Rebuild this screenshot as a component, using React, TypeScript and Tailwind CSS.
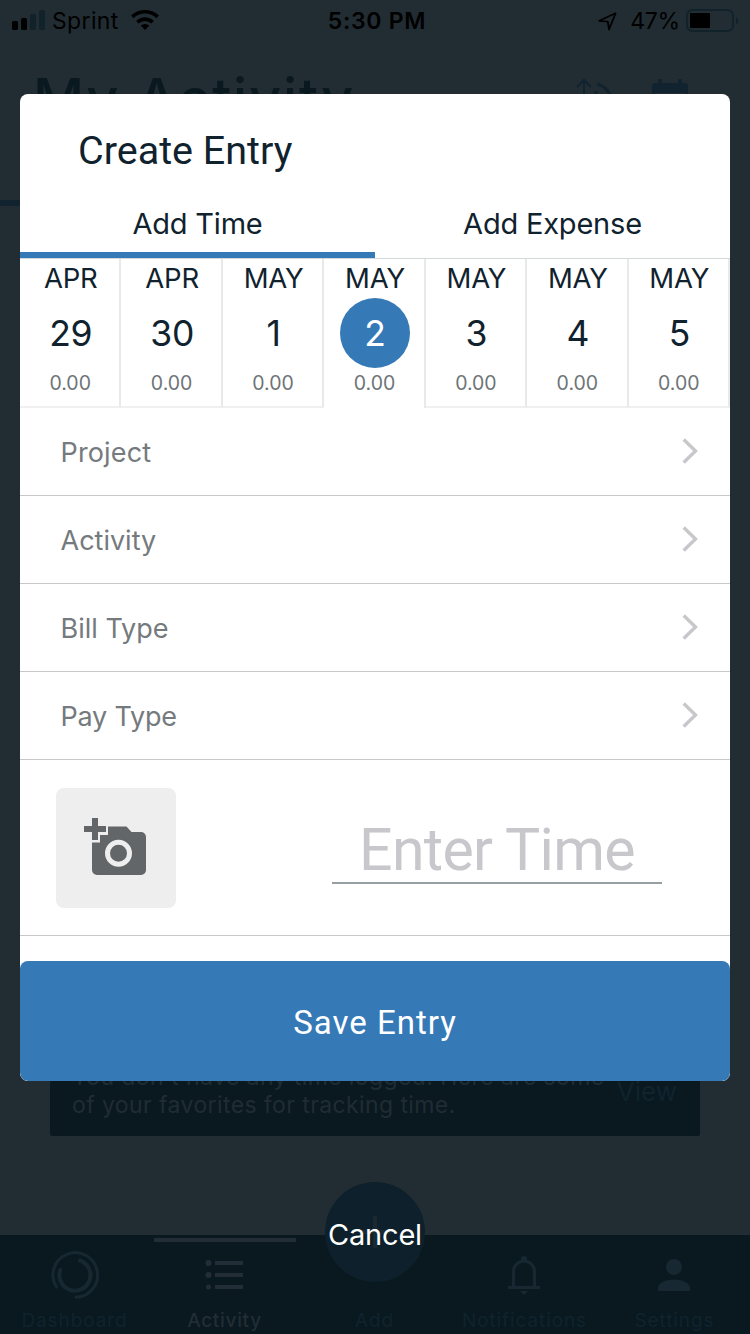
import type { ReactNode } from "react";

const DAYS = [
  { month: "APR", day: "29", hours: "0.00" },
  { month: "APR", day: "30", hours: "0.00" },
  { month: "MAY", day: "1", hours: "0.00" },
  { month: "MAY", day: "2", hours: "0.00", selected: true },
  { month: "MAY", day: "3", hours: "0.00" },
  { month: "MAY", day: "4", hours: "0.00" },
  { month: "MAY", day: "5", hours: "0.00" },
];

const FIELDS = [
  { label: "Project", tracking: "tracking-[0.15px]" },
  { label: "Activity", tracking: "tracking-[0px]" },
  { label: "Bill Type", tracking: "tracking-[0px]" },
  { label: "Pay Type", tracking: "tracking-[-0.2px]" },
];

function StatusBar() {
  return (
    <div className="flex h-10 items-center justify-between pr-[10px] pl-3 text-[23px] leading-[24px] text-black">
      <div className="flex w-[310px] items-center">
        <svg width="34" height="20" viewBox="0 0 34 20">
          <rect x="0" y="11" width="6" height="9" rx="1.5" fill="#000" />
          <rect x="9" y="8" width="6" height="12" rx="1.5" fill="#000" />
          <rect x="18" y="4" width="6" height="16" rx="1.5" fill="#11222b" />
          <rect x="27" y="0" width="6" height="20" rx="1.5" fill="#11222b" />
        </svg>
        <span className="ml-[6px] pt-[2px] tracking-[0.35px]">Sprint</span>
        <svg className="ml-3" width="28" height="20" viewBox="0 0 28 20">
          <path d="M14 20l-4.300-4.400a6.300 6.300 0 0 1 8.600 0z" fill="#000" />
          <path d="M6.400 12.200a11 11 0 0 1 15.200 0" fill="none" stroke="#000" strokeWidth="3.600" />
          <path d="M1.300 6.900a18.300 18.300 0 0 1 25.400 0" fill="none" stroke="#000" strokeWidth="3.600" />
        </svg>
      </div>
      <span className="pt-[2px] pl-[2px] font-semibold tracking-[0.7px]">5:30 PM</span>
      <div className="flex w-[310px] items-center justify-end">
        <svg className="mt-[2px]" width="19" height="19" viewBox="0 0 19 19">
          <path d="M17.500 1.300L11 17.500l-1.200-7.800L1.300 8.800z" fill="none" stroke="#000" strokeWidth="1.800" strokeLinejoin="round" />
        </svg>
        <span className="ml-[13px] pt-[2px] tracking-[-0.2px]">47%</span>
        <svg className="mt-[2px] ml-[6px]" width="54" height="24" viewBox="0 0 54 24">
          <rect x="1" y="1" width="46" height="21" rx="5.500" fill="none" stroke="#11222b" strokeWidth="2" />
          <rect x="4" y="4" width="20" height="15" rx="1" fill="#000" />
          <path d="M50 8.200c3 1 3 6.200 0 7.200z" fill="#11222b" />
        </svg>
      </div>
    </div>
  );
}

function ActivityHeader() {
  return (
    <>
      <div className="flex h-[160px] items-start justify-between pt-[35px] pr-[62px] pl-[33px]">
        <h1 className="text-[56px] leading-[48px] font-medium tracking-[1.8px] text-[#09191f]">My Activity</h1>
        <div className="flex gap-[39px] pt-[3px]">
          <svg width="38" height="40" viewBox="0 0 38 40" fill="none" stroke="#10232e" strokeWidth="2">
            <path d="M9 36V2M2 9l7-7 7 7" />
            <path d="M22 6a20 20 0 0 1 15 18" strokeWidth="3" />
            <path d="M21 13v12" strokeWidth="3" />
          </svg>
          <svg width="36" height="40" viewBox="0 0 36 40">
            <path d="M6 1h4v4h16V1h4v4h3a3 3 0 0 1 3 3v28H0V8a3 3 0 0 1 3-3h3z" fill="#10232e" />
            <path d="M3 15h30v20H3z" fill="#222d33" />
          </svg>
        </div>
      </div>
      <div className="h-[6px] w-[375px] bg-[#10232e]" />
    </>
  );
}

function FavoritesCard() {
  return (
    <div className="mx-[50px] flex h-[100px] items-center justify-between rounded-[2px] bg-[#09191f] pr-[23px] pl-[22px]">
      <p className="pt-[9px] text-[23px] leading-[28px] tracking-[0.4px] whitespace-nowrap text-[#202c33]">
        You don&apos;t have any time logged. Here are some
        <br />
        of your favorites for tracking time.
      </p>
      <span className="pt-[11px] text-[26px] text-[#10232e]">View</span>
    </div>
  );
}

function TabItem({ label, active, children }: { label: string; active?: boolean; children?: ReactNode }) {
  return (
    <div className="flex w-[150px] flex-col items-center pt-[3px]">
      <div className={active ? "h-1 w-[142px] shrink-0 bg-[#222d38]" : "h-1 w-[142px] shrink-0"} />
      <div className="flex h-[65px] shrink-0 items-center justify-center">{children}</div>
      <span
        className={
          active
            ? "pr-px text-[19px] leading-[28px] font-medium tracking-[0.7px] text-[#222d35]"
            : "pr-px text-[19px] leading-[28px] tracking-[0.9px] text-[#10232e]"
        }
      >
        {label}
      </span>
    </div>
  );
}

function TabBar() {
  return (
    <div className="relative flex h-[99px] bg-[#09191f]">
      <TabItem label="Dashboard">
        <svg width="48" height="48" viewBox="0 0 48 48" fill="none" stroke="#172832" strokeWidth="3" strokeLinecap="round">
          <path d="M5.500 36A22.300 22.300 0 1 1 25 46.300" />
          <path d="M29 9.500A15.500 15.500 0 1 1 9.300 19" strokeWidth="4" />
        </svg>
      </TabItem>
      <TabItem label="Activity" active>
        <svg className="mr-[3px]" width="38" height="30" viewBox="0 0 38 30" fill="#222d38">
          <circle cx="3.500" cy="3" r="3" />
          <circle cx="3.500" cy="15" r="3" />
          <circle cx="3.500" cy="27" r="2.500" />
          <path d="M10 1h28v4H10zM10 13h28v4H10zM10 25h28v4H10z" />
        </svg>
      </TabItem>
      <TabItem label="Add" />
      <TabItem label="Notifications">
        <svg className="mt-px mr-[2px]" width="32" height="39" viewBox="0 0 32 39" fill="#172832">
          <path
            d="M0 31.500h32M5.500 30V15.500a10.500 10.500 0 0 1 21 0V30"
            fill="none"
            stroke="#172832"
            strokeWidth="3.200"
          />
          <circle cx="16" cy="3" r="3" />
          <path d="M12 35h8l-4 4z" />
        </svg>
      </TabItem>
      <TabItem label="Settings">
        <svg className="mr-[2px]" width="32" height="32" viewBox="0 0 32 32" fill="#172832">
          <circle cx="16" cy="8" r="8" />
          <path d="M0 32v-3c0-5 8-8.500 16-8.500S32 24 32 29v3z" />
        </svg>
      </TabItem>
      <div className="absolute -top-[53px] left-[325px] flex size-[100px] items-center justify-center rounded-full bg-[#0d202b]">
        <svg width="32" height="32" viewBox="0 0 32 32">
          <path d="M14 0h4v14h14v4H18v14h-4V18H0v-4h14z" fill="#1b2a32" />
        </svg>
      </div>
    </div>
  );
}

function DayStrip() {
  return (
    <div className="grid h-[150px] grid-cols-7 border-t border-[#d3d8db]">
      {DAYS.map((d) => (
        <div
          key={d.month + d.day}
          className={
            d.selected
              ? "flex flex-col items-center border-r-2 border-[#e9e9e9] pl-[2px]"
              : "flex flex-col items-center border-r-2 border-b-2 border-[#e9e9e9] border-b-[#f0f0f0] pl-[2px]"
          }
        >
          <span className="h-[39px] text-[27.500px] leading-[39px] tracking-[-0.2px] text-[#10222e]">{d.month}</span>
          <span
            className={
              d.selected
                ? "flex size-[70px] items-center justify-center rounded-full bg-[#3579b7] pt-[2px] text-[35.500px] text-white"
                : "flex size-[70px] items-center justify-center pt-[2px] text-[35.500px] tracking-[-0.3px] text-[#10222e]"
            }
          >
            {d.day}
          </span>
          <span className="pr-px text-[19.500px] leading-[30px] text-[#6d7478]">{d.hours}</span>
        </div>
      ))}
    </div>
  );
}

function CreateEntryModal() {
  return (
    <div className="mx-5 mt-[94px] flex h-[987px] flex-col overflow-hidden rounded-lg bg-white">
      <h2 className="h-[96px] pt-[28px] pl-[58px] font-[Roboto,sans-serif] text-[39.500px] leading-[57px] text-[#10222e]">
        Create Entry
      </h2>
      <div className="grid h-[68px] grid-cols-2 text-center text-[29px] leading-[67px] tracking-[-0.2px] text-[#10222e]">
        <div className="h-[68px] border-b-[6px] border-[#3579b7]">Add Time</div>
        <div className="h-[68px]">Add Expense</div>
      </div>
      <DayStrip />
      {FIELDS.map((f) => (
        <div key={f.label} className="flex h-[88px] items-center justify-between border-b border-[#c8c8c8] pr-8 pl-[40.5px]">
          <span className={`pt-[4px] text-[27px] text-[#747a7d] ${f.tracking}`}>{f.label}</span>
          <svg className="-mt-px" width="16" height="26" viewBox="0 0 16 26" fill="none" stroke="#c7c7cc" strokeWidth="3.400">
            <path d="M1.700 1.500L13.500 13 1.700 24.500" />
          </svg>
        </div>
      ))}
      <div className="flex h-[176px] items-center justify-between border-b border-[#c8c8c8] pr-[68px] pl-9">
        <div className="flex size-[120px] items-center justify-center rounded-lg bg-[#eee] pr-[2px] pb-[3px]">
          <svg width="62" height="57" viewBox="0 0 62 57">
            <path d="M8 0h6v8h8v6h-8v8H8v-8H0V8h8z" fill="#626668" />
            <path
              d="M24 8.500h18.500l5 5.500H57a5 5 0 0 1 5 5v33a5 5 0 0 1-5 5H13a5 5 0 0 1-5-5V24.500h8V17h8z"
              fill="#626668"
            />
            <circle cx="34.500" cy="35.300" r="11" fill="none" stroke="#eee" strokeWidth="5" />
          </svg>
        </div>
        <div className="h-[72px] w-[330px] border-b-2 border-[#979fa3] text-center font-[Roboto,sans-serif] text-[59px] leading-[75px] tracking-[-0.7px] text-[#c7c7cc]">
          Enter Time
        </div>
      </div>
      <div className="mt-auto h-[120px] rounded-lg bg-[#3579b7] text-center font-[Roboto,sans-serif] text-[33px] leading-[124px] tracking-[1px] text-white">
        Save Entry
      </div>
    </div>
  );
}

export default function App() {
  return (
    <div className="relative h-[1334px] w-[750px] overflow-hidden bg-[#222d33] font-['Inter','Liberation_Sans',sans-serif]">
      <div className="flex h-full flex-col">
        <StatusBar />
        <ActivityHeader />
        <div className="flex flex-1 flex-col justify-end pb-[99px]">
          <FavoritesCard />
        </div>
        <TabBar />
      </div>
      <div className="absolute inset-0 flex flex-col">
        <CreateEntryModal />
        <div className="mt-[134px] text-center text-[29px] leading-[40px] tracking-[-0.2px] text-white">Cancel</div>
      </div>
    </div>
  );
}
